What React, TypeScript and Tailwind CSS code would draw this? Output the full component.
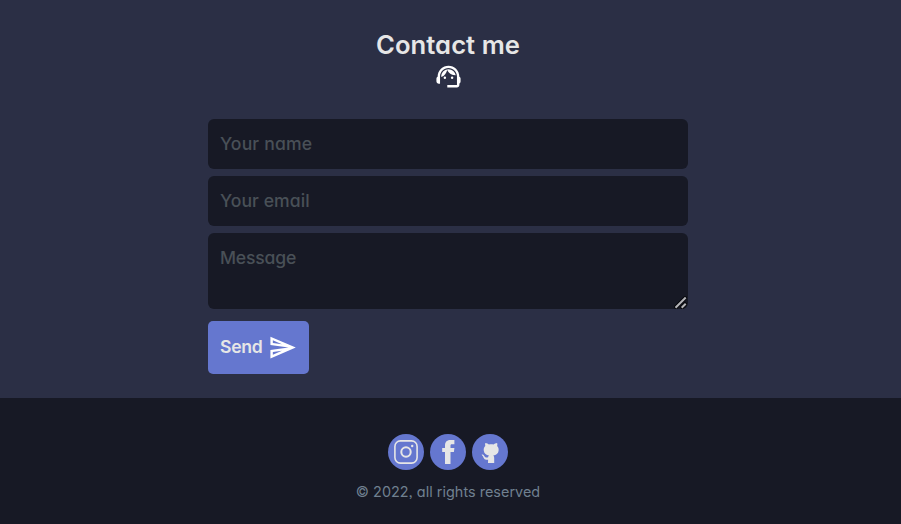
import { MdOutlineSend, MdSupportAgent } from "react-icons/md";

const field =
  "block w-full rounded-[6px] bg-[#171925] px-3 text-[17.6px] font-medium text-[#e6e6e6] placeholder:text-[#495057] placeholder:opacity-100 outline-none";

const circle = "flex size-9 items-center justify-center rounded-full bg-[#6577cf] text-[#e6e6e6]";

function Instagram() {
  return (
    <svg width="24" height="24" viewBox="0 0 24 24" fill="none" stroke="currentColor" strokeWidth="1.6">
      <rect x="0.9" y="0.9" width="22.2" height="22.2" rx="5.5" />
      <circle cx="12" cy="12" r="4.7" strokeWidth="2" />
      <circle cx="18.2" cy="6" r="1.2" fill="currentColor" stroke="none" />
    </svg>
  );
}

function Facebook() {
  return (
    <svg width="24" height="24" viewBox="0 0 24 24" fill="currentColor">
      <path d="M9 24V12H6.2V8H9V5.8C9 2.2 10.5 0 14.4 0H18.4V4.2H16C14.6 4.2 14.5 4.8 14.5 6V8H18.4L17.9 12H14.5V24Z" />
    </svg>
  );
}

function Octocat() {
  return (
    <svg className="ml-[1px]" width="20" height="22" viewBox="0 0 20 22" fill="currentColor">
      <path d="M4.3 2.1C4 3 4 4.2 4.3 5.1C2.9 6.4 2.5 8 2.8 9.7C3.2 12.8 5.2 14 8 14.5C7.4 15 7.2 15.6 7.1 16.3C5.4 17 4.2 16.4 3.3 15C2.7 14.1 1.8 13.6 1 13.6C.3 13.7.7 14.1 1.2 14.4C2.6 15.4 2.5 18.4 5.3 18.7C6 18.8 6.6 18.8 7.1 18.7L7 22H13.2V17C13.2 15.8 12.9 15 12.3 14.5C15.2 14 17.2 12.7 17.6 9.7C17.8 7.9 17.4 6.3 16.1 5.1C16.5 4 16.4 2.9 16.1 2C14.7 2 13.3 2.8 12.5 3.5C11 3.1 9.3 3.1 7.9 3.5C7 2.8 5.7 2 4.3 2.1Z" />
    </svg>
  );
}

function ResizeGrip() {
  return (
    <svg className="pointer-events-none absolute right-[1px] bottom-0" width="13" height="13" viewBox="0 0 13 13" strokeLinecap="square">
      <path d="M2.2 11L11 2.2M8.4 11L11 8.4" stroke="#08090d" strokeWidth="4" />
      <path d="M2.2 11L11 2.2M8.4 11L11 8.4" stroke="#b4b4b8" strokeWidth="2" />
    </svg>
  );
}

export default function App() {
  return (
    <div className="flex h-[524px] w-full flex-col bg-[#2b2f45] font-['Inter','Open_Sans',sans-serif] [font-feature-settings:'cv11','ss03']">
      <main className="flex h-[398px] flex-col pr-[5px]">
        <header className="flex flex-col items-center pt-[26px] text-[#e6e6e6]">
          <h2 className="h-[36px] text-[25.6px] leading-[38px] font-semibold tracking-[0.05px] whitespace-nowrap">Contact me</h2>
          <MdSupportAgent className="size-[29px] text-white" />
        </header>
        <form className="mx-auto mt-[28px] flex w-[480px] flex-col items-start" onSubmit={(e) => e.preventDefault()}>
          <input className={`${field} h-[50px] pb-[2px] tracking-[0.15px]`} placeholder="Your name" />
          <input className={`${field} mt-[7px] h-[50px] pb-[2px] tracking-[0.05px]`} placeholder="Your email" />
          <div className="relative mt-[7px] w-full">
            <textarea className={`${field} h-[76px] resize-none py-3 leading-[26px] tracking-[-0.2px]`} placeholder="Message" />
            <ResizeGrip />
          </div>
          <button className="mt-3 flex h-[53px] w-[101px] items-center gap-[5px] rounded-[5px] bg-[#6577cf] pl-3 text-[17.6px] font-semibold tracking-[-0.3px] text-[#e6e6e6]">
            <span className="w-[43px] text-left">Send</span>
            <MdOutlineSend className="size-[29px] shrink-0 text-white" />
          </button>
        </form>
      </main>
      <footer className="flex flex-1 flex-col items-center bg-[#171925] pt-9 pr-[5px]">
        <div className="flex gap-[6px]">
          <a className={circle}><Instagram /></a>
          <a className={circle}><Facebook /></a>
          <a className={circle}><Octocat /></a>
        </div>
        <p className="mt-[11px] text-[14.4px] leading-[21px] tracking-[0.03px] whitespace-nowrap text-[#708090]">© 2022, all rights reserved</p>
      </footer>
    </div>
  );
}
